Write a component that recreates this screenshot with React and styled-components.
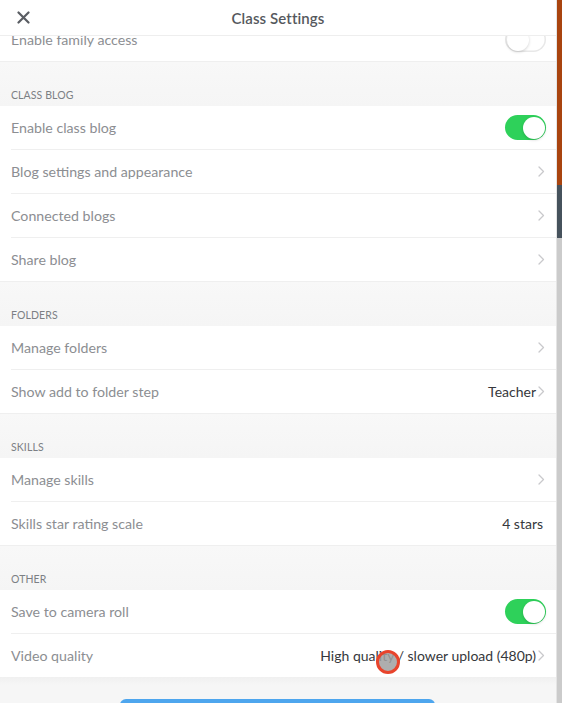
import React from "react";
import styled, { createGlobalStyle } from "styled-components";

const GlobalStyle = createGlobalStyle`
  html, body {
    margin: 0;
    padding: 0;
    background: #ffffff;
  }
  body {
    font-family: "Lato", "Noto Sans", sans-serif;
    -webkit-font-smoothing: antialiased;
  }
`;

// settings data, grouped by section
const sections = [
  {
    title: "Class Blog",
    rows: [
      { label: "Enable class blog", toggle: true },
      { label: "Blog settings and appearance", chevron: true },
      { label: "Connected blogs", chevron: true },
      { label: "Share blog", chevron: true },
    ],
  },
  {
    title: "Folders",
    rows: [
      { label: "Manage folders", chevron: true },
      { label: "Show add to folder step", value: "Teacher", chevron: true },
    ],
  },
  {
    title: "Skills",
    rows: [
      { label: "Manage skills", chevron: true },
      { label: "Skills star rating scale", value: "4 stars" },
    ],
  },
  {
    title: "Other",
    rows: [
      { label: "Save to camera roll", toggle: true },
      {
        label: "Video quality",
        value: "High quality / slower upload (480p)",
        chevron: true,
      },
    ],
  },
];

const Chevron = () => (
  <svg width="7" height="11" viewBox="0 0 7 11" fill="none">
    <path
      d="M1 1l4.5 4.5L1 10"
      stroke="#c9c9cc"
      strokeWidth="1.3"
      strokeLinecap="round"
      strokeLinejoin="round"
    />
  </svg>
);

const CloseIcon = () => (
  <svg width="13" height="13" viewBox="0 0 13 13">
    <path
      d="M1.5 1.5l10 10M11.5 1.5l-10 10"
      stroke="#5a5d63"
      strokeWidth="2.2"
      strokeLinecap="round"
    />
  </svg>
);

const SettingRow = ({ label, value, toggle, chevron, last }) => (
  <Row $last={last}>
    <RowInner $last={last}>
      <Label>{label}</Label>
      <Trailing>
        {value && <Value $alone={!chevron}>{value}</Value>}
        {chevron && <Chevron />}
        {toggle !== undefined && (
          <Toggle $on={toggle}>
            <Knob $on={toggle} />
          </Toggle>
        )}
      </Trailing>
    </RowInner>
  </Row>
);

const App = () => {
  return (
    <Screen>
      <GlobalStyle />
      <Panel>
        <Header>
          <CloseButton>
            <CloseIcon />
          </CloseButton>
          <Title>Class Settings</Title>
        </Header>
        <Body>
          <List>
            <SettingRow label="Enable family access" toggle={false} last />
            {sections.map((section) => (
              <React.Fragment key={section.title}>
                <SectionHeader>{section.title}</SectionHeader>
                {section.rows.map((row, i) => (
                  <SettingRow
                    key={row.label}
                    {...row}
                    last={i === section.rows.length - 1}
                  />
                ))}
              </React.Fragment>
            ))}
          </List>
        </Body>
        <Footer>
          <SaveButton />
        </Footer>
        <TouchCursor />
      </Panel>
      <Backdrop>
        <BackdropBlock $color="#a9440f" $height={185} />
        <BackdropBlock $color="#46525c" $height={53} />
        <BackdropBlock $color="#cbcbcb" $grow />
      </Backdrop>
    </Screen>
  );
};

const Screen = styled.div`
  display: flex;
  width: 562px;
  height: 703px;
  overflow: hidden;
`;

const Panel = styled.section`
  position: relative;
  display: flex;
  flex-direction: column;
  width: 557px;
  height: 703px;
  background: #f7f7f7;
  border-right: 1px solid #e4e4e4;
  box-sizing: border-box;
  overflow: hidden;
`;

const Header = styled.header`
  position: relative;
  z-index: 2;
  display: flex;
  align-items: center;
  justify-content: center;
  height: 36px;
  flex-shrink: 0;
  background: #ffffff;
  border-bottom: 1px solid #eeeeee;
  box-sizing: border-box;
`;

const CloseButton = styled.div`
  position: absolute;
  left: 17px;
  top: 11px;
  display: flex;
`;

const Title = styled.h1`
  margin: 0;
  font-size: 15px;
  font-weight: 600;
  color: #55585d;
  letter-spacing: 0.1px;
`;

const Body = styled.div`
  flex: 1;
  min-height: 0;
  overflow: hidden;
`;

const List = styled.div`
  margin-top: -18px;
`;

const SectionHeader = styled.div`
  display: flex;
  align-items: flex-end;
  height: 44px;
  padding: 0 11px 5px;
  box-sizing: border-box;
  background: linear-gradient(#f8f8f8, #f5f5f5);
  font-size: 10.5px;
  text-transform: uppercase;
  color: #7c7f84;
  letter-spacing: 0.1px;
`;

const Row = styled.div`
  padding-left: 11px;
  background: #ffffff;
  border-bottom: ${({ $last }) => ($last ? "1px solid #efefef" : "none")};
`;

const RowInner = styled.div`
  display: flex;
  align-items: center;
  justify-content: space-between;
  height: 43px;
  padding-right: 10px;
  border-bottom: ${({ $last }) => ($last ? "none" : "1px solid #efefef")};
`;

const Label = styled.span`
  font-size: 14.2px;
  color: #8c8e92;
`;

const Trailing = styled.div`
  display: flex;
  align-items: center;
  gap: 2px;
  padding-right: 1px;
`;

const Value = styled.span`
  font-size: 14px;
  color: #36383c;
  margin-right: ${({ $alone }) => ($alone ? "2px" : "0")};
`;

const Toggle = styled.div`
  display: flex;
  align-items: center;
  justify-content: ${({ $on }) => ($on ? "flex-end" : "flex-start")};
  width: 41px;
  height: 25px;
  padding: 1.5px;
  box-sizing: border-box;
  border-radius: 13px;
  background: ${({ $on }) => ($on ? "#2ed15a" : "#ffffff")};
  box-shadow: ${({ $on }) => ($on ? "none" : "inset 0 0 0 1.5px #e8e8e8")};
  margin-right: -1px;
`;

const Knob = styled.div`
  width: 22px;
  height: 22px;
  border-radius: 50%;
  background: #ffffff;
  box-shadow: 0 1px 3px rgba(0, 0, 0, 0.18);
`;

const Footer = styled.footer`
  display: flex;
  justify-content: center;
  align-items: flex-start;
  height: 26px;
  flex-shrink: 0;
  padding-top: 22px;
  box-sizing: border-box;
  overflow: hidden;
  background: linear-gradient(#f0f0f0, #f6f6f6 8px);
`;

const SaveButton = styled.div`
  flex-shrink: 0;
  width: 315px;
  height: 30px;
  margin-left: -1px;
  border-radius: 6px;
  background: #4ea6ee;
`;

const TouchCursor = styled.div`
  position: absolute;
  left: 376px;
  top: 650px;
  width: 18px;
  height: 18px;
  border-radius: 50%;
  border: 3px solid #e8442c;
  background: rgba(160, 160, 160, 0.85);
`;

const Backdrop = styled.aside`
  display: flex;
  flex-direction: column;
  flex: 1;
`;

const BackdropBlock = styled.div`
  background: ${({ $color }) => $color};
  height: ${({ $height }) => ($height ? `${$height}px` : "auto")};
  flex: ${({ $grow }) => ($grow ? 1 : "none")};
`;

export default App;
